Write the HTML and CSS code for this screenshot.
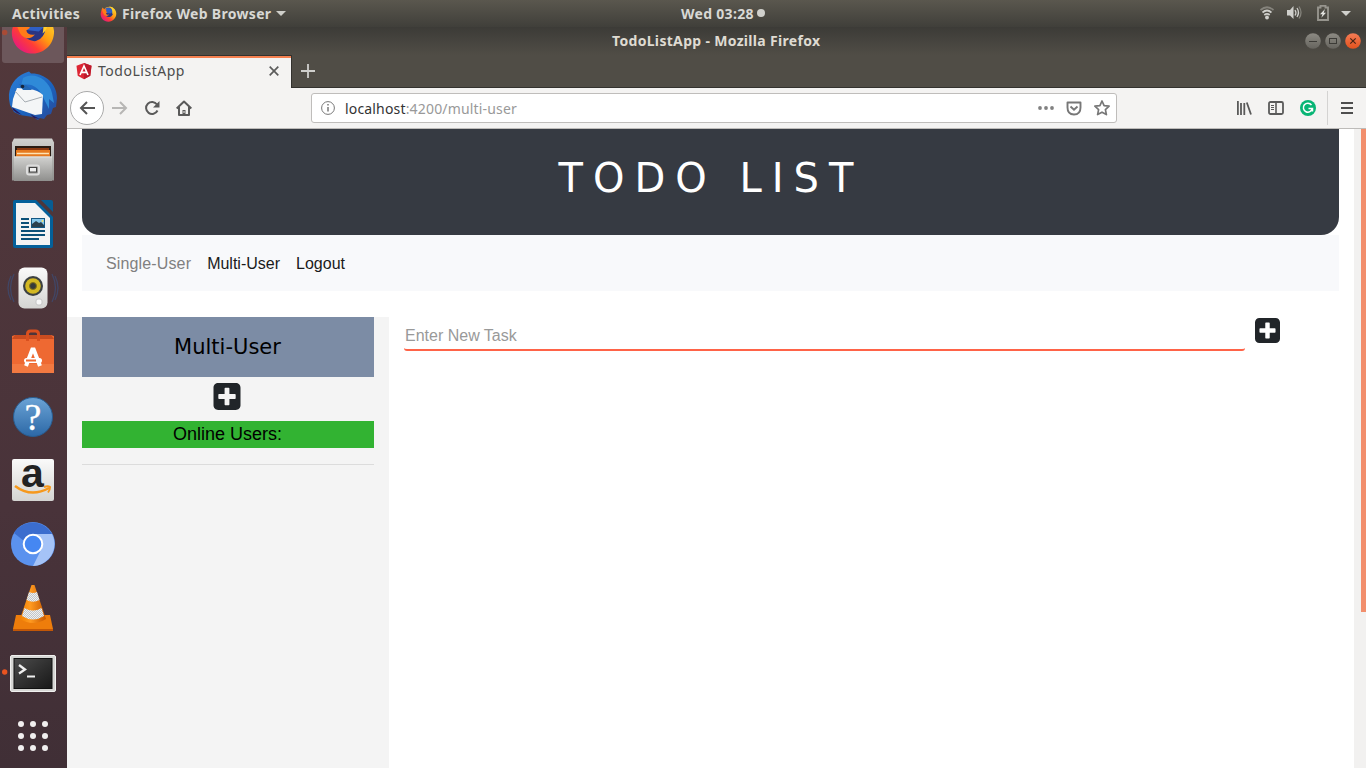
FILE: index.html
```html
<!DOCTYPE html>
<html lang="en">
<head>
<meta charset="utf-8">
<title>TodoListApp</title>
<link rel="stylesheet" href="styles.css">
</head>
<body>
<svg width="0" height="0" class="defs">
  <defs>
    <linearGradient id="fox" x1=".9" y1=".1" x2=".1" y2=".9"><stop offset="0" stop-color="#ffd52e"/><stop offset=".4" stop-color="#ff9a10"/><stop offset=".68" stop-color="#ff3c36"/><stop offset="1" stop-color="#e31587"/></linearGradient>
    <linearGradient id="bird" x1="0" y1="0" x2="1" y2="1"><stop offset="0" stop-color="#2c7fd8"/><stop offset=".6" stop-color="#1b62bd"/><stop offset="1" stop-color="#2b4796"/></linearGradient>
    <linearGradient id="metal" x1="0" y1="0" x2="0" y2="1"><stop offset="0" stop-color="#d2d2d0"/><stop offset="1" stop-color="#8f8f8d"/></linearGradient>
    <linearGradient id="white" x1="0" y1="0" x2="0" y2="1"><stop offset="0" stop-color="#fafafa"/><stop offset="1" stop-color="#d4d4d2"/></linearGradient>
    <linearGradient id="blue" x1="0" y1="0" x2="0" y2="1"><stop offset="0" stop-color="#6ba3d6"/><stop offset="1" stop-color="#2c68a6"/></linearGradient>
    <linearGradient id="term" x1="0" y1="0" x2="1" y2="1"><stop offset="0" stop-color="#4c4c4c"/><stop offset=".6" stop-color="#2c2c2c"/><stop offset="1" stop-color="#181818"/></linearGradient>
    <linearGradient id="cone" x1="0" y1="0" x2="1" y2="0"><stop offset="0" stop-color="#f08000"/><stop offset=".4" stop-color="#ff9a20"/><stop offset="1" stop-color="#c85800"/></linearGradient>
    <linearGradient id="button" x1="0" y1="0" x2="0" y2="1"><stop offset="0" stop-color="#8c8a83"/><stop offset="1" stop-color="#66645e"/></linearGradient>
    <linearGradient id="close" x1="0" y1="0" x2="0" y2="1"><stop offset="0" stop-color="#f57c55"/><stop offset="1" stop-color="#e4521d"/></linearGradient>
    <pattern id="check" width="2" height="2" patternUnits="userSpaceOnUse"><rect width="2" height="2" fill="#f0f0f0"/><path d="M0 0h1v1H0zM1 1h1v1H1z" fill="#c2c6c8"/></pattern>
    <symbol id="firefox" viewBox="0 0 48 48">
      <path d="M4 15L7 7L12 12C22 0 44 4 46 24C46 37 36 47 24 47C10 47 1 36 2 23Z" fill="url(#fox)"/>
      <circle cx="24" cy="20" r="13" fill="#2f5fc4"/>
      <path d="M13 22Q16 35 27 34Q37 31 37 18L30 24Z" fill="#2b3482"/>
      <path d="M26 4C35 9 36 18 34 26C41 21 40 12 36 7Z" fill="#ffd02c"/>
      <path d="M5 13L12 12L18 12L17 18L21 20L17 23C18 27 22 28 26 27C23 31 17 33 12 28C9 24 8 19 5 13Z" fill="#ff7b18"/>
    </symbol>
    <symbol id="plus" viewBox="0 0 448 448"><path fill-rule="evenodd" d="M370 0H78C34 0 0 34 0 78v292c0 44 34 78 78 78h292c44 0 78-34 78-78V78c0-44-34-78-78-78zM368 252c0 6.600-5.400 12-12 12h-92v92c0 6.600-5.400 12-12 12h-56c-6.600 0-12-5.400-12-12v-92H92c-6.600 0-12-5.400-12-12v-56c0-6.600 5.400-12 12-12h92V92c0-6.600 5.400-12 12-12h56c6.600 0 12 5.400 12 12v92h92c6.600 0 12 5.400 12 12z" fill="#212529"/></symbol>
  </defs>
</svg>

<header class="topbar">
  <div class="top-left">
    <span class="activities">Activities</span>
    <svg class="top-fox" width="17" height="17"><use href="#firefox"/></svg>
    <span class="app-name">Firefox Web Browser</span>
    <svg width="10" height="5"><path d="M0 0h10L5 5z" fill="#cfcfca"/></svg>
  </div>
  <div class="clock"><span>Wed 03:28</span><i class="clock-dot"></i></div>
  <div class="tray">
    <svg width="16" height="16" fill="none" stroke="#d0d0cc" stroke-width="1.700"><path d="M1.500 5Q8 -.5 14.500 5" stroke="#85837c"/><path d="M3.500 7.500Q8 3.500 12.500 7.500M5.300 10Q8 7.700 10.700 10"/><circle cx="8" cy="12.500" r="1.900" fill="#d0d0cc" stroke="none"/></svg>
    <svg width="16" height="16"><path d="M1 5h3l3.500-4v13L4 10.500H1z" fill="#d0d0cc"/><path d="M9 5q1.800 2.700 0 5.500M11 3q3 4.500 0 9" fill="none" stroke="#d0d0cc" stroke-width="1.300"/><path d="M13 1.500q4 6 0 12" fill="none" stroke="#85837c" stroke-width="1.300"/></svg>
    <svg width="12" height="16"><path d="M1 2.500h2.500V.8h5v1.700H11V15H1z" fill="none" stroke="#96948d" stroke-width="1.900"/><path d="M8 4L3 9.300h2.500L4.300 12.700L9 7.800H6.700z" fill="#e4e4e0"/></svg>
    <svg width="10" height="5"><path d="M0 0h10L5 5z" fill="#d0d0cc"/></svg>
  </div>
</header>

<div class="desktop">
  <nav class="dock">
    <svg viewBox="0 0 67 64"><rect x="2" y="1" width="62" height="61" rx="3" fill="#6c575b"/><circle cx="4.700" cy="31.500" r="2.700" fill="#a94b36"/><use href="#firefox" x="10" y="7" width="46" height="47"/></svg>
    <svg viewBox="0 0 67 64">
      <path d="M9 34C8 22 15 12 25 8L29 6.500L31 8.500C45 8 57 19 57 33L56 42L53 43L51 49L47 50L44 54L40 53L38 55L33 52L20 50L14 47L10 40Z" fill="url(#bird)"/>
      <path d="M23 13C33 6 49 14 52 28L54 38L49 34L49 44L42 30C38 22 30 17 21 21Z" fill="#2f8ad8"/>
      <path d="M12 42L22 50L17 48L13 45ZM30 49L40 54L34 53Z" fill="#241b60"/>
      <path d="M17 23L29 24Q38 25 43 30L42 49L35 50L12 42L13 34Z" fill="#f4f6f7"/><path d="M15 26L25 37L42 32" fill="none" stroke="#a6adb3"/><path d="M19 19L26 20L32 25L23 25Z" fill="#2368b4"/><circle cx="22.500" cy="21.500" r="1.800" fill="#16263c"/>
    </svg>
    <svg viewBox="0 0 67 64">
      <path d="M14 9.500h38l2 4v38H12v-38z" fill="url(#metal)"/><path d="M15 17h36v13H15z" fill="#2a1c14"/><path d="M17 19h32v3H17z" fill="#8c3a12"/><path d="M16 21h34v8H16z" fill="#e6791e"/><path d="M17 24.500h32" stroke="#ffe2b2" stroke-width="1.500"/><path d="M14 27.500h38v24.500H14z" fill="url(#metal)"/><path d="M14 28h38" stroke="#e4e4e2"/><rect x="27" y="36.500" width="12" height="9" rx="2" fill="#9b9b99" stroke="#ddd" stroke-width="2"/><rect x="29.500" y="38.500" width="7" height="4.500" fill="#eee" stroke="#444"/>
    </svg>
    <svg viewBox="0 0 67 64">
      <path d="M15 7h21l17 17v29q0 2-2 2H15q-2 0-2-2V9q0-2 2-2z" fill="#04609a"/><path d="M41 7h10q2 0 2 2v10z" fill="#075d93"/><path d="M16 10h19l15 15v27H16z" fill="#f3f3f3"/><path d="M21 26h8M21 30h8M21 34h8M21 38h24M21 42h24M21 46h18" stroke="#0b5078" stroke-width="1.800"/><rect x="31.500" y="25.500" width="13" height="9" fill="#86c7ea" stroke="#145883"/><path d="M32 34v-3l4-3 3 2 2-1 3 3v2z" fill="#2b414e"/><circle cx="42.500" cy="28" r="1" fill="#ffe165"/>
    </svg>
    <svg viewBox="0 0 67 64">
      <path d="M14 17Q7 31 14 45M52 17Q59 31 52 45M11 19Q5 31 11 43M55 19Q61 31 55 43" fill="none" stroke="#414665" stroke-width="1.300"/><rect x="18.500" y="10.500" width="29" height="41" rx="6" fill="url(#white)"/><circle cx="33" cy="29" r="10" fill="#3c4142"/><circle cx="33" cy="29" r="7.800" fill="#d3b823"/><circle cx="33" cy="29" r="3.500" fill="#353a3b" stroke="#857317"/><rect x="36" y="42" width="6" height="6" rx="2" fill="#f8f8f8" stroke="#c6c6c6"/>
    </svg>
    <svg viewBox="0 0 67 64">
      <path d="M12 15L15 14H51L54 15V52H12z" fill="#ee6932"/><path d="M12 18L15 14H51L54 18z" fill="#c94c20"/><path d="M12 43h42v9H12z" fill="#f27941"/><path d="M27.500 20v-7q0-3 3-3h5q3 0 3 3v7" fill="none" stroke="#d9501f" stroke-width="3"/><path d="M26 45L32.300 28.500h1.400L40 45" fill="none" stroke="#fff" stroke-width="4"/><rect x="24" y="37" width="18" height="5" rx="2.500" fill="#fff"/><path d="M26 39.500h10" stroke="#ef6b34" stroke-width="2"/>
    </svg>
    <svg viewBox="0 0 67 64"><circle cx="33" cy="32" r="19.500" fill="url(#blue)" stroke="#285d91"/><text x="33" y="45" class="help">?</text></svg>
    <svg viewBox="0 0 67 64"><rect x="12" y="10" width="42" height="42" rx="2" fill="url(#white)"/><text x="32.500" y="38" class="shop">a</text><path d="M15 37Q31 49 49 39" fill="none" stroke="#f6981c" stroke-width="2.500"/><path d="M44 38Q48 36.500 50 38Q50 41 48 43.500" fill="none" stroke="#f6981c" stroke-width="2"/></svg>
    <svg viewBox="0 0 67 64"><circle cx="33" cy="31" r="22" fill="#5b92ee"/><path d="M14 20A22 22 0 0 1 52 21H33A10 10 0 0 0 24 28z" fill="#3b6dce"/><path d="M33 21H52A22 22 0 0 1 33 53L42 35z" fill="#a5c3f7"/><circle cx="33" cy="31" r="9.300" fill="#4587f2" stroke="#fff" stroke-width="2"/></svg>
    <svg viewBox="0 0 67 64"><path d="M16 38h34l3 14H13z" fill="#ee7d0b"/><path d="M13 52h40v2H13z" fill="#c25707"/><path d="M31.500 8h3L46 42Q33 50 20 42z" fill="url(#cone)"/><path d="M29 15Q33 17 37 15L39.500 23Q33 26.500 26.500 23zM24.500 31Q33 36 41.500 31L44 39Q33 46 22 39z" fill="url(#check)"/></svg>
    <svg viewBox="0 0 67 64"><circle cx="4.700" cy="31" r="2.700" fill="#e95420"/><rect x="10.500" y="14.500" width="45" height="36" rx="1.500" fill="#d6d6d4" stroke="#f0f0ef"/><rect x="14" y="17.500" width="38" height="30" fill="url(#term)" stroke="#111"/><path d="M19 24l6 4.500-6 4" fill="none" stroke="#f0f0f0" stroke-width="2.300"/><path d="M27 35.500h8" stroke="#f0f0f0" stroke-width="2"/></svg>
    <svg viewBox="0 0 67 64" fill="#f1efef"><circle cx="21" cy="19" r="3"/><circle cx="33" cy="19" r="3"/><circle cx="45" cy="19" r="3"/><circle cx="21" cy="31" r="3"/><circle cx="33" cy="31" r="3"/><circle cx="45" cy="31" r="3"/><circle cx="21" cy="43" r="3"/><circle cx="33" cy="43" r="3"/><circle cx="45" cy="43" r="3"/></svg>
  </nav>

  <main class="window">
    <div class="titlebar">
      <span class="window-title">TodoListApp - Mozilla Firefox</span>
      <div class="window-buttons">
        <svg width="16" height="16"><circle cx="8" cy="8" r="7.800" fill="url(#button)"/><path d="M4 8.500h8" stroke="#3c3b37"/></svg>
        <svg width="16" height="16"><circle cx="8" cy="8" r="7.800" fill="url(#button)"/><rect x="4.500" y="5.500" width="7" height="5" fill="none" stroke="#3c3b37"/></svg>
        <svg width="16" height="16"><circle cx="8" cy="8" r="7.800" fill="url(#close)"/><path d="M5.300 5.300l5.400 5.400M10.700 5.300l-5.400 5.400" stroke="#4a2415" stroke-width="1.200"/></svg>
      </div>
    </div>
    <div class="tabs">
      <div class="tab">
        <svg width="16" height="18" viewBox="0 0 16 18"><path d="M8 1l7.500 2.700-1.200 10L8 17.200l-6.300-3.500L.5 3.700z" fill="#dd2634"/><path d="M8 1l7.500 2.700-1.200 10L8 17.200z" fill="#bd1a2c"/><path d="M4 13L8 4l4 9M5.500 10.300h5" fill="none" stroke="#fff" stroke-width="1.700"/></svg>
        <span class="tab-title">TodoListApp</span>
        <svg width="10" height="10"><path d="M.7 .7l8.600 8.600M9.300 .7L.7 9.300" stroke="#5c5c5b" stroke-width="1.700"/></svg>
      </div>
      <svg class="new-tab" width="14" height="14"><path d="M7 0v14M0 7h14" stroke="#cfcfcc" stroke-width="1.800"/></svg>
    </div>
    <div class="toolbar">
      <span class="back"><svg width="16" height="14" fill="none" stroke="#555" stroke-width="2"><path d="M16 7H2M8 1L2 7l6 6"/></svg></span>
      <svg class="forward" width="16" height="14" fill="none" stroke="#b7b6b5" stroke-width="2"><path d="M0 7h14M8 1l6 6-6 6"/></svg>
      <svg class="reload" width="16" height="16" fill="none" stroke="#5a5a5a" stroke-width="2"><path d="M13 4.500A6 6 0 1 0 13.500 10.500"/><path d="M15.500 1v6.500H9z" fill="#5a5a5a" stroke="none"/></svg>
      <svg class="home" width="16" height="16" fill="none" stroke="#5a5a5a" stroke-width="2"><path d="M.7 8.500L8 1.500l7.300 7M3 7v8h10V7" stroke-linejoin="round"/><path d="M8 15v-5" stroke-width="3"/><path d="M8 11v2" stroke="#f4f3f2" stroke-width="1"/></svg>
      <div class="urlbar">
        <svg width="14" height="14" fill="none" stroke="#777"><circle cx="7" cy="7" r="6.400"/><path d="M7 6v4.500M7 3v1.600" stroke-width="1.500"/></svg>
        <span class="url">localhost<span class="path">:4200/multi-user</span></span>
        <svg class="dots" width="16" height="4" fill="#818181"><circle cx="2" cy="2" r="1.900"/><circle cx="8" cy="2" r="1.900"/><circle cx="14" cy="2" r="1.900"/></svg>
        <svg width="16" height="15" fill="none" stroke="#777" stroke-width="1.900"><path d="M1.500 1.500h13v5q0 7-6.500 7t-6.500-7z" stroke-linejoin="round"/><path d="M4.500 5.500L8 8.700l3.500-3.200"/></svg>
        <svg class="star" width="16" height="16" fill="none" stroke="#777" stroke-width="1.700" stroke-linejoin="round"><path d="M8 1l2.100 4.600 5 .6-3.700 3.400 1 5L8 12.200l-4.400 2.400 1-5L.9 6.200l5-.6z"/></svg>
      </div>
      <div class="tools">
        <svg width="16" height="14" stroke="#5a5a5a" stroke-width="1.800"><path d="M1.900 0v14M5 2v12M8.300 2v12M10.800 1.500L15 13.500"/></svg>
        <svg width="16" height="14" fill="none" stroke="#5a5a5a"><rect x="1" y="1" width="14" height="12" rx="1.500" stroke-width="1.800"/><path d="M8 1v12" stroke-width="1.600"/><path d="M3 4.500h3M3 6.500h3M3 8.500h3"/></svg>
        <svg width="16" height="16" fill="none" stroke="#fff" stroke-width="1.500"><circle cx="8" cy="8" r="8" fill="#08b575" stroke="none"/><path d="M11.500 5A4.500 4.500 0 1 0 12.300 8.500M8.500 8.500h4v3"/></svg>
      </div>
      <div class="menu"><svg width="12" height="12" stroke="#4e4e4e" stroke-width="2"><path d="M0 1h12M0 6h12M0 11h12"/></svg></div>
    </div>
    <div class="page">
      <div class="content">
        <div class="hero"><h1>TODO LIST</h1></div>
        <div class="nav"><span class="muted">Single-User</span><span>Multi-User</span><span>Logout</span></div>
        <div class="row">
          <aside class="sidebar">
            <div class="side-title">Multi-User</div>
            <svg class="add-list" width="28" height="27" preserveAspectRatio="none"><use href="#plus"/></svg>
            <div class="online">Online Users:</div>
            <div class="rule"></div>
          </aside>
          <section class="tasks">
            <div class="field">Enter New Task</div>
            <svg class="add-task" width="25" height="25"><use href="#plus"/></svg>
          </section>
        </div>
      </div>
      <div class="scroll"><div class="thumb"></div></div>
    </div>
  </main>
</div>
</body>
</html>
```
FILE: styles.css
```css
* { box-sizing: border-box; }
body { margin: 0; width: 1366px; height: 768px; overflow: hidden; background: #fff; font-family: "Noto Sans", sans-serif; }
svg { display: block; flex: none; }
.defs { position: absolute; }
.topbar { height: 27px; display: grid; grid-template-columns: 681px 84px 1fr; align-items: center; background: linear-gradient(#5a574e, #403f3a); color: #d8d8d4; font-size: 14px; font-weight: 700; line-height: 26px; white-space: nowrap; }
.top-left { display: flex; align-items: center; padding-left: 12px; }
.activities { width: 68px; letter-spacing: .3px; }
.top-fox { margin: 0 5px 0 20px; }
.app-name { width: 149px; margin-right: 5px; letter-spacing: .32px; }
.clock { display: flex; align-items: center; justify-content: space-between; height: 26px; padding-bottom: 1px; line-height: 25px; font-size: 14px; letter-spacing: .3px; }
.clock-dot { width: 8px; height: 8px; margin-right: 0; border-radius: 50%; background: #d0d0cc; }
.tray { display: flex; align-items: center; justify-content: flex-end; padding: 0 15px 1px 0; }
.tray svg:nth-child(1) { margin-right: 11px; }
.tray svg:nth-child(2) { margin-right: 15px; }
.tray svg:nth-child(3) { margin-right: 12px; }
.desktop { display: flex; height: 741px; }
.dock { width: 67px; height: 741px; flex: none; overflow: hidden; background: linear-gradient(#52383b, #49333a 65%, #402f36); }
.dock svg { width: 67px; height: 64px; }
.dock > svg:first-child { margin-top: -26px; }
.help { font: 400 38px "Liberation Serif", serif; fill: #fff; stroke: #fff; stroke-width: .3px; text-anchor: middle; }
.shop { font: 700 41px "Liberation Sans", sans-serif; fill: #222; text-anchor: middle; }
.window { flex: 1; min-width: 0; display: flex; flex-direction: column; background: #504d46; }
.titlebar { height: 28px; flex: none; display: grid; grid-template-columns: 545px 1fr auto; align-items: center; background: linear-gradient(#3c3b37, #504d46); color: #dfdbd2; font-size: 14px; font-weight: 700; line-height: 28px; }
.window-title { grid-column: 2; white-space: nowrap; letter-spacing: .32px; }
.window-buttons { display: flex; gap: 4px; padding-right: 5px; }
.tabs { height: 33px; flex: none; display: flex; border-bottom: 1px solid #33322e; }
.tab { width: 225px; height: 33px; flex: none; display: flex; align-items: center; padding: 0 11px 2px 9px; background: #f4f3f2; border-top: 1px solid #33322e; border-right: 1px solid #33322e; box-shadow: inset 0 2px #f5804f; color: #4c4c4c; font-size: 14px; }
.tab-title { width: 171px; margin-left: 6px; line-height: 28px; letter-spacing: .52px; }
.new-tab { margin: 9px 0 0 9px; }
.toolbar { height: 41px; flex: none; display: flex; align-items: center; background: #f4f3f2; border-bottom: 1px solid #bdbbb9; }
.back { width: 34px; height: 34px; margin: 0 8px 0 3px; border: 1px solid #aaa; border-radius: 50%; background: #fff; display: flex; align-items: center; justify-content: center; }
.reload { margin-left: 16px; }
.home { margin: 0 119px 0 16px; }
.urlbar { width: 806px; height: 30px; display: flex; align-items: center; padding: 0 6px 0 9px; background: #fff; border: 1px solid #bfbdbb; border-radius: 3px; font-size: 14px; color: #333; }
.url { margin-left: 10px; padding-top: 2px; flex: 1; line-height: 26px; letter-spacing: .17px; }
.path { color: #999; }
.dots { margin-right: 12px; }
.star { margin-left: 12px; }
.tools { display: flex; align-items: center; gap: 16px; margin-left: 119px; }
.menu { height: 34px; margin-left: 11px; padding-left: 13px; border-left: 1px solid #d4d3d2; display: flex; align-items: center; }
.page { flex: 1; min-height: 0; display: flex; background: #fff; }
.content { width: 1287px; flex: none; display: flex; flex-direction: column; font-family: "Liberation Sans", sans-serif; font-size: 16px; }
.hero { height: 106px; flex: none; margin: 0 15px; background: #363a42; border-radius: 0 0 18px 18px; }
.hero h1 { margin: 0; padding: 25px 0 0 1px; color: #fff; font: 400 40px/48px "DejaVu Sans", sans-serif; letter-spacing: 10px; text-align: center; }
.nav { height: 56px; flex: none; margin: 0 15px; padding-left: 24px; display: flex; gap: 16px; line-height: 57px; color: #1a1a1a; background: #f8f9fb; }
.muted { color: #808080; letter-spacing: .14px; }
.row { flex: 1; display: flex; margin-top: 26px; }
.sidebar { width: 322px; padding: 0 15px; background: #f4f4f4; color: #000; text-align: center; }
.side-title { height: 60px; padding-right: 1px; background: #7c8ca5; font: 21px/61px "DejaVu Sans", sans-serif; }
.add-list { margin: 6px auto 11px 131px; }
.online { height: 27px; padding-right: 1px; background: #32b332; font-size: 18px; line-height: 26px; }
.rule { margin-top: 16px; border-top: 1px solid #dcdcdc; }
.tasks { display: flex; align-items: flex-start; padding-left: 15px; }
.field { width: 841px; height: 34px; padding-left: 1px; line-height: 37px; color: #999; border-bottom: 2px solid #ff6347; border-radius: 3px; }
.add-task { margin: 1px 0 0 10px; }
.scroll { width: 12px; background: #f2f1f0; display: flex; justify-content: flex-end; }
.thumb { width: 5px; height: 483px; background: #f28e6c; }
```
